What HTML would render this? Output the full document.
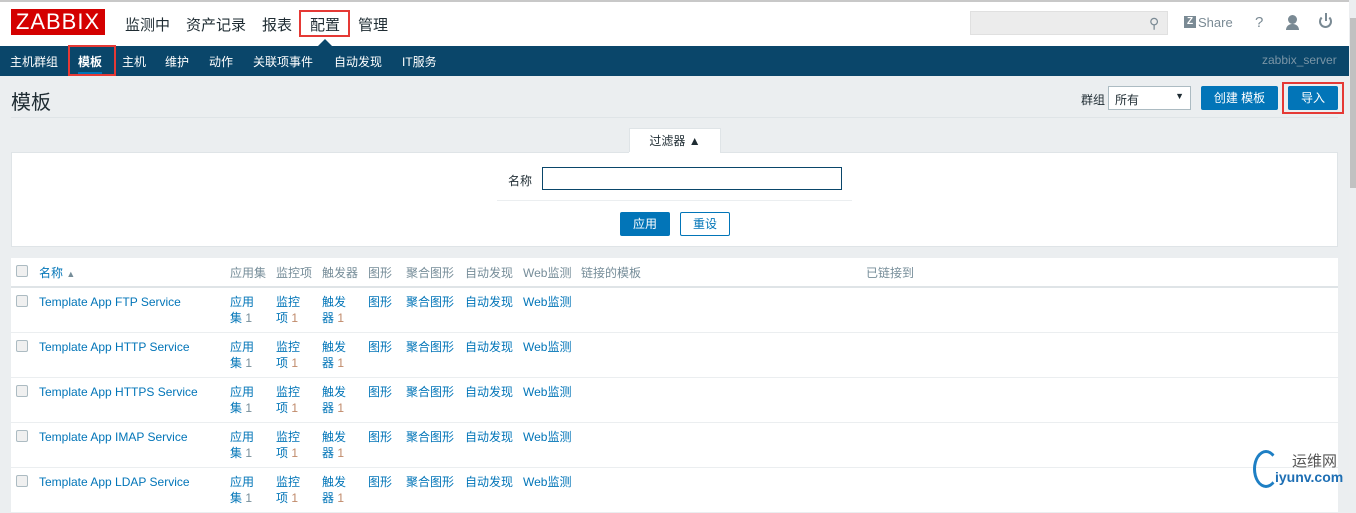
<!DOCTYPE html><html><head><meta charset="utf-8"><style>
*{box-sizing:border-box;margin:0;padding:0}
body{width:1356px;height:493px;overflow:hidden;background:#ebeef0;font-family:"Liberation Sans","Noto Sans CJK SC",sans-serif;font-size:12px;color:#1f2c33;position:relative}
.a{position:absolute}
.top{left:0;top:0;width:1349px;height:46px;background:#fff;border-top:2px solid #c8c8c8}
.logo{left:11px;top:9px;width:94px;height:26px;background:#d40000;color:#fff;font-size:22px;line-height:26px;text-align:center;letter-spacing:1px}
.mm{top:14px;font-size:15px;color:#1f2c33}
.nav{left:0;top:46px;width:1349px;height:30px;background:#0a466a}
.nav span{position:absolute;top:7px;color:#fff;font-size:12px}
.red{border:2px solid #e53935}
.btn{background:#0275b8;color:#fff;font-size:12px;text-align:center;border-radius:2px}
.lnk{color:#0275b8}
.hd{color:#768d99}
.cb{width:12px;height:12px;border:1px solid #acbbc2;border-radius:2px;background:#f0f0f0}
.sb{left:1349px;top:0;width:7px;height:493px;background:#eceef0}
.row{left:11px;width:1327px;height:45px;background:#fff;border-bottom:1px solid #ebeef0}
.row span{position:absolute;top:6px;line-height:16px}
.g{color:#768d99}
</style></head><body>
<div class="a top"></div>
<div class="a logo">ZABBIX</div>
<div class="a mm" style="left:125px">监测中</div>
<div class="a mm" style="left:186px">资产记录</div>
<div class="a mm" style="left:262px">报表</div>
<div class="a mm" style="left:310px">配置</div>
<div class="a red" style="left:299px;top:10px;width:51px;height:27px"></div>
<div class="a mm" style="left:358px">管理</div>
<div class="a" style="left:970px;top:11px;width:198px;height:24px;background:#ececec;border:1px solid #e0e0e0"></div>
<div class="a" style="left:1149px;top:15px;color:#7a8a94;font-size:14px">&#9906;</div>
<div class="a" style="left:1184px;top:16px;width:12px;height:12px;background:#7a8a94;color:#fff;font-size:10px;line-height:12px;text-align:center;font-weight:bold">Z</div>
<div class="a" style="left:1198px;top:15px;color:#7a8a94;font-size:13px">Share</div>
<div class="a" style="left:1255px;top:14px;color:#7a8a94;font-size:15px">?</div>
<div class="a" style="left:1288px;top:15px;width:9px;height:9px;border-radius:50%;background:#7a8a94"></div>
<div class="a" style="left:1286px;top:24px;width:13px;height:6px;border-radius:6px 6px 0 0;background:#7a8a94"></div>
<div class="a" style="left:1319px;top:15px;width:13px;height:13px;border:2px solid #7a8a94;border-radius:50%;border-top-color:transparent"></div>
<div class="a" style="left:1325px;top:13px;width:2px;height:8px;background:#7a8a94"></div>
<div class="a" style="left:318px;top:39px;width:0;height:0;border:7px solid transparent;border-bottom-color:#0a466a;border-top:0"></div>
<div class="a nav">
<span style="left:10px">主机群组</span><span style="left:78px;font-weight:bold">模板</span><span style="left:122px">主机</span><span style="left:165px">维护</span><span style="left:209px">动作</span><span style="left:253px">关联项事件</span><span style="left:334px">自动发现</span><span style="left:402px">IT服务</span>
<span style="left:1262px;color:#7a95a6">zabbix_server</span>
</div>
<div class="a" style="left:78px;top:72px;width:24px;height:2px;background:#0275b8"></div>
<div class="a red" style="left:68px;top:45px;width:48px;height:31px"></div>
<div class="a" style="left:11px;top:86px;font-size:20px;color:#1f2c33">模板</div>
<div class="a" style="left:1081px;top:91px">群组</div>
<div class="a" style="left:1108px;top:86px;width:83px;height:24px;background:#fff;border:1px solid #acbbc2;padding:4px 6px">所有<span style="position:absolute;right:6px;top:4px;font-size:9px">▼</span></div>
<div class="a btn" style="left:1201px;top:86px;width:77px;height:24px;line-height:24px">创建 模板</div>
<div class="a btn" style="left:1288px;top:86px;width:50px;height:24px;line-height:24px">导入</div>
<div class="a red" style="left:1282px;top:82px;width:62px;height:32px"></div>
<div class="a" style="left:11px;top:117px;width:1327px;height:1px;background:#dfe4e7"></div>
<div class="a" style="left:629px;top:128px;width:92px;height:25px;background:#fff;border:1px solid #dfe4e7;border-bottom:0;text-align:center;line-height:24px">过滤器 ▲</div>
<div class="a" style="left:11px;top:152px;width:1327px;height:95px;background:#fff;border:1px solid #dfe4e7"></div>
<div class="a" style="left:629px;top:152px;width:91px;height:2px;background:#fff"></div>
<div class="a" style="left:508px;top:172px">名称</div>
<div class="a" style="left:542px;top:167px;width:300px;height:23px;border:1px solid #0a466a;background:#fff"></div>
<div class="a" style="left:497px;top:200px;width:355px;height:1px;background:#ebeef0"></div>
<div class="a btn" style="left:620px;top:212px;width:50px;height:24px;line-height:24px">应用</div>
<div class="a" style="left:680px;top:212px;width:50px;height:24px;line-height:22px;border:1px solid #0275b8;color:#0275b8;text-align:center;background:#fff;border-radius:2px">重设</div>
<div class="a" style="left:11px;top:258px;width:1327px;height:30px;background:#fff;border-bottom:2px solid #dfe4e7"></div>
<div class="a cb" style="left:16px;top:265px"></div>
<div class="a lnk" style="left:39px;top:264px">名称 <span class="g" style="font-size:9px">▲</span></div>
<div class="a hd" style="left:230px;top:264px">应用集</div><div class="a hd" style="left:276px;top:264px">监控项</div><div class="a hd" style="left:322px;top:264px">触发器</div><div class="a hd" style="left:368px;top:264px">图形</div><div class="a hd" style="left:406px;top:264px">聚合图形</div><div class="a hd" style="left:465px;top:264px">自动发现</div><div class="a hd" style="left:523px;top:264px">Web监测</div><div class="a hd" style="left:581px;top:264px">链接的模板</div><div class="a hd" style="left:866px;top:264px">已链接到</div>
<div id="rows"></div>
<script>
var n=["FTP","HTTP","HTTPS","IMAP","LDAP"],h="";
n.forEach(function(s,i){var t=288+i*45;h+='<div class="a row" style="top:'+t+'px"><div class="a cb" style="left:5px;top:7px"></div><span class="lnk" style="left:28px">Template App '+s+' Service</span><span class="lnk" style="left:219px">应用<br>集 <b class="g" style="font-weight:normal">1</b></span><span class="lnk" style="left:265px">监控<br>项 <b style="font-weight:normal;color:#c08a6a">1</b></span><span class="lnk" style="left:311px">触发<br>器 <b style="font-weight:normal;color:#c08a6a">1</b></span><span class="lnk" style="left:357px">图形</span><span class="lnk" style="left:395px">聚合图形</span><span class="lnk" style="left:454px">自动发现</span><span class="lnk" style="left:512px">Web监测</span></div>'});
document.getElementById("rows").innerHTML=h;
</script>
<div class="a sb"></div>
<div class="a" style="left:1350px;top:18px;width:6px;height:170px;background:#c1c1c1"></div>
<div class="a" style="left:1253px;top:450px;width:26px;height:38px;border:3px solid #1e7fc4;border-right-color:transparent;border-radius:50%"></div>
<div class="a" style="left:1292px;top:450px;font-size:15px;color:#555">运维网</div>
<div class="a" style="left:1275px;top:469px;font-size:14px;color:#1e6fb4;font-weight:bold">iyunv.com</div>
</body></html>
